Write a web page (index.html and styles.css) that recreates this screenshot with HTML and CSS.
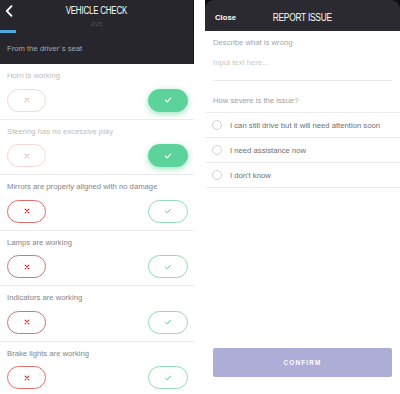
FILE: index.html
```html
<!DOCTYPE html>
<html>
<head>
<meta charset="utf-8">
<link rel="stylesheet" href="styles.css">
</head>
<body>
<div class="screen">
  <section class="check">
    <header class="check-head">
      <div class="topbar">
        <svg class="back" viewBox="0 0 8 12" width="8" height="12"><path d="M6.5 1.2 L1.8 6 L6.5 10.8"/></svg>
        <div class="title">VEHICLE CHECK</div>
        <div class="count">2/25</div>
      </div>
      <div class="progress"><div class="progress-fill" style="width:16px"></div></div>
      <div class="section">From the driver`s seat</div>
    </header>
    <ul class="items">
      <li class="item done">
        <div class="label">Horn is working</div>
        <div class="actions">
          <span class="btn no"><svg viewBox="0 0 8 8" width="6" height="6"><path d="M1.5 1.5 L6.5 6.5 M6.5 1.5 L1.5 6.5"/></svg></span>
          <span class="btn yes"><svg viewBox="0 0 10 8" width="8" height="6"><path d="M1.5 4.2 L3.9 6.4 L8.5 1.6"/></svg></span>
        </div>
      </li>
      <li class="item done">
        <div class="label">Steering has no excessive play</div>
        <div class="actions">
          <span class="btn no"><svg viewBox="0 0 8 8" width="6" height="6"><path d="M1.5 1.5 L6.5 6.5 M6.5 1.5 L1.5 6.5"/></svg></span>
          <span class="btn yes"><svg viewBox="0 0 10 8" width="8" height="6"><path d="M1.5 4.2 L3.9 6.4 L8.5 1.6"/></svg></span>
        </div>
      </li>
      <li class="item">
        <div class="label">Mirrors are properly aligned with no damage</div>
        <div class="actions">
          <span class="btn no"><svg viewBox="0 0 8 8" width="6" height="6"><path d="M1.5 1.5 L6.5 6.5 M6.5 1.5 L1.5 6.5"/></svg></span>
          <span class="btn yes"><svg viewBox="0 0 10 8" width="8" height="6"><path d="M1.5 4.2 L3.9 6.4 L8.5 1.6"/></svg></span>
        </div>
      </li>
      <li class="item">
        <div class="label">Lamps are working</div>
        <div class="actions">
          <span class="btn no"><svg viewBox="0 0 8 8" width="6" height="6"><path d="M1.5 1.5 L6.5 6.5 M6.5 1.5 L1.5 6.5"/></svg></span>
          <span class="btn yes"><svg viewBox="0 0 10 8" width="8" height="6"><path d="M1.5 4.2 L3.9 6.4 L8.5 1.6"/></svg></span>
        </div>
      </li>
      <li class="item">
        <div class="label">Indicators are working</div>
        <div class="actions">
          <span class="btn no"><svg viewBox="0 0 8 8" width="6" height="6"><path d="M1.5 1.5 L6.5 6.5 M6.5 1.5 L1.5 6.5"/></svg></span>
          <span class="btn yes"><svg viewBox="0 0 10 8" width="8" height="6"><path d="M1.5 4.2 L3.9 6.4 L8.5 1.6"/></svg></span>
        </div>
      </li>
      <li class="item">
        <div class="label">Brake lights are working</div>
        <div class="actions">
          <span class="btn no"><svg viewBox="0 0 8 8" width="6" height="6"><path d="M1.5 1.5 L6.5 6.5 M6.5 1.5 L1.5 6.5"/></svg></span>
          <span class="btn yes"><svg viewBox="0 0 10 8" width="8" height="6"><path d="M1.5 4.2 L3.9 6.4 L8.5 1.6"/></svg></span>
        </div>
      </li>
    </ul>
  </section>

  <section class="report">
    <header class="report-head">
      <div class="close">Close</div>
      <div class="report-title">REPORT ISSUE</div>
      <div class="spacer"></div>
    </header>
    <div class="describe">
      <div class="field-label">Describe what is wrong</div>
      <div class="placeholder">Input text here...</div>
    </div>
    <div class="question">How severe is the issue?</div>
    <ul class="options">
      <li class="option"><span class="radio"></span>I can still drive but it will need attention soon</li>
      <li class="option"><span class="radio"></span>I need assistance now</li>
      <li class="option"><span class="radio"></span>I don't know</li>
    </ul>
    <div class="fill"></div>
    <div class="confirm">CONFIRM</div>
  </section>
</div>
</body>
</html>
```

FILE: styles.css
```css
* { box-sizing: border-box; }
html, body { margin: 0; padding: 0; background: #ffffff; }
body {
  font-family: "Liberation Sans", Arial, sans-serif;
  font-size: 7.7px;
  width: 400px;
  height: 394px;
  overflow: hidden;
}
ul { list-style: none; margin: 0; padding: 0; }

.screen {
  display: flex;
  gap: 11px;
  height: 394px;
}

/* ---------- left: vehicle check ---------- */
.check {
  width: 194px;
  flex: none;
  display: flex;
  flex-direction: column;
  overflow: hidden;
}
.check-head {
  flex: none;
  height: 64px;
  background: #26262c;
  border-right: 1px solid #141417;
}
.topbar {
  display: grid;
  grid-template-columns: 1fr auto 1fr;
  grid-template-rows: 16px 13px;
  align-items: center;
  height: 29px;
  padding-top: 3px;
}
.back {
  grid-column: 1;
  grid-row: 1;
  margin-left: 5px;
  fill: none;
  stroke: #ffffff;
  stroke-width: 1.8;
  stroke-linecap: round;
  stroke-linejoin: round;
}
.title {
  grid-column: 2;
  grid-row: 1;
  color: #ffffff;
  font-family: "Liberation Sans Narrow", "Liberation Sans", sans-serif;
  font-size: 10px;
  letter-spacing: -0.3px;
  line-height: 12px;
  transform: scaleX(0.8);
}
.count {
  grid-column: 2;
  grid-row: 2;
  text-align: center;
  color: #55555c;
  font-size: 6px;
  line-height: 8px;
  align-self: start;
  padding-top: 1px;
}
.progress {
  height: 3px;
  margin-top: 0.5px;
}
.progress-fill {
  height: 3px;
  background: #4fa9dc;
}
.section {
  color: #a9a9ae;
  line-height: 10px;
  padding: 11px 7px 0;
}

.items { flex: none; }
.item {
  height: 55.5px;
  padding: 7px 6px 0 7px;
  border-bottom: 1px solid #ececec;
}
.label {
  color: #858585;
  line-height: 10px;
  height: 10px;
  white-space: nowrap;
}
.done .label { color: #bdbdbd; }
.actions {
  display: flex;
  justify-content: space-between;
  margin-top: 7.5px;
}
.btn {
  display: flex;
  align-items: center;
  justify-content: center;
  height: 23px;
  border-radius: 12px;
  background: #ffffff;
}
.btn svg {
  fill: none;
  stroke-linecap: round;
  stroke-linejoin: round;
}
.btn.no {
  width: 39px;
  border: 1px solid #de6e6e;
}
.btn.no svg { stroke: #d02c2c; stroke-width: 1.5; }
.btn.yes {
  width: 40px;
  border: 1px solid #90dcb6;
}
.btn.yes svg { stroke: #5ec992; stroke-width: 1.3; }

.done .btn.no { border-color: #f7d6d6; }
.done .btn.no svg { stroke: #f4b8b8; }
.done .btn.yes {
  background: #5cd39a;
  border-color: #5cd39a;
  box-shadow: 0 2px 6px rgba(80, 205, 145, 0.55);
}
.done .btn.yes svg { stroke: #ffffff; stroke-width: 1.5; }

/* ---------- right: report issue ---------- */
.report {
  flex: 1;
  display: flex;
  flex-direction: column;
  background: linear-gradient(#0e0e10 0, #0e0e10 10px, #ffffff 10px);
}
.report-head {
  flex: none;
  height: 31px;
  background: #2a2a30;
  border-radius: 9px 9px 0 0;
  display: grid;
  grid-template-columns: 1fr auto 1fr;
  align-items: center;
  padding: 4px 10px 0;
}
.close {
  color: #ffffff;
  font-weight: bold;
  font-size: 7.7px;
}
.report-title {
  color: #ffffff;
  font-family: "Liberation Sans Narrow", "Liberation Sans", sans-serif;
  font-size: 10px;
  letter-spacing: -0.3px;
  transform: scaleX(0.84);
}
.describe {
  margin: 0 8px;
  padding-top: 7px;
  padding-bottom: 11.5px;
  border-bottom: 1px solid #e8e8e8;
}
.field-label {
  color: #a6a6a6;
  line-height: 10px;
}
.placeholder {
  color: #c9c9c9;
  line-height: 10px;
  margin-top: 10px;
}
.question {
  color: #a0a0a0;
  line-height: 10px;
  padding: 15px 8px 6.5px;
  border-bottom: 1px solid #ececec;
}
.option {
  height: 25px;
  border-bottom: 1px solid #ececec;
  display: flex;
  align-items: center;
  gap: 8px;
  padding-left: 7px;
  color: #707070;
}
.radio {
  width: 10px;
  height: 10px;
  border-radius: 50%;
  border: 1px solid #d2d2d2;
  flex: none;
}
.fill { flex: 1; }
.confirm {
  flex: none;
  margin: 0 8px 17px;
  height: 29px;
  border-radius: 2px;
  background: #adadd7;
  color: #ffffff;
  font-weight: bold;
  font-size: 6.3px;
  letter-spacing: 1.2px;
  display: flex;
  align-items: center;
  justify-content: center;
}
```
